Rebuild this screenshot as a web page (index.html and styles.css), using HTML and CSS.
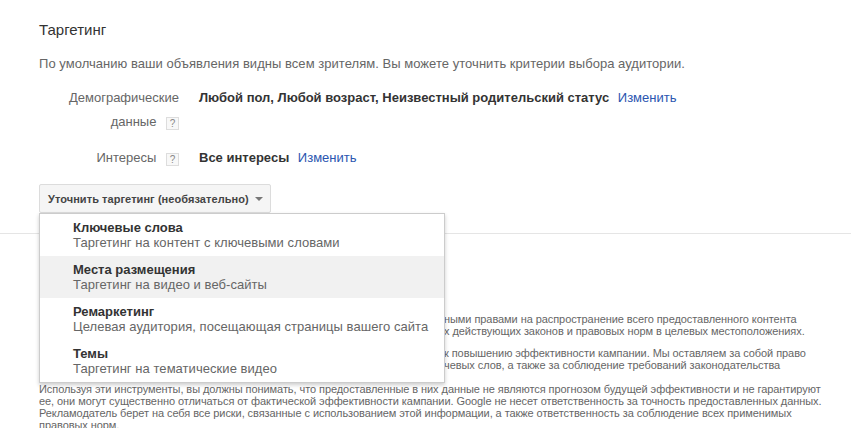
FILE: index.html
```html
<!DOCTYPE html>
<html lang="ru">
<head>
<meta charset="utf-8">
<title>Таргетинг</title>
<link rel="stylesheet" href="styles.css">
</head>
<body>
<main class="page">
  <h2 class="title">Таргетинг</h2>
  <p class="intro">По умолчанию ваши объявления видны всем зрителям. Вы можете уточнить критерии выбора аудитории.</p>
  <div class="row row-demo">
    <div class="label">Демографические<br>данные <span class="help">?</span></div>
    <div class="value"><b>Любой пол, Любой возраст, Неизвестный родительский статус</b> <a class="link" href="#">Изменить</a></div>
  </div>
  <div class="row row-int">
    <div class="label">Интересы <span class="help">?</span></div>
    <div class="value"><b>Все интересы</b> <a class="link" href="#">Изменить</a></div>
  </div>
  <div class="dropdown">
    <button class="btn" type="button">Уточнить таргетинг (необязательно)<span class="caret"></span></button>
    <ul class="menu">
      <li class="item"><strong>Ключевые слова</strong><span>Таргетинг на контент с ключевыми словами</span></li>
      <li class="item item-active"><strong>Места размещения</strong><span>Таргетинг на видео и веб-сайты</span></li>
      <li class="item"><strong>Ремаркетинг</strong><span>Целевая аудитория, посещающая страницы вашего сайта</span></li>
      <li class="item"><strong>Темы</strong><span>Таргетинг на тематические видео</span></li>
    </ul>
  </div>
  <hr class="rule">
  <section class="legal">
    <p class="para"><span class="line cut-1">ными правами на распространение всего предоставленного контента</span><span class="line cut-2">х действующих законов и правовых норм в целевых местоположениях.</span></p>
    <p class="para"><span class="line cut-3">к повышению эффективности кампании. Мы оставляем за собой право</span><span class="line cut-4">чевых слов, а также за соблюдение требований законодательства</span></p>
    <p class="para para-last"><span class="line">Используя эти инструменты, вы должны понимать, что предоставленные в них данные не являются прогнозом будущей эффективности и не гарантируют</span><span class="line">ее, они могут существенно отличаться от фактической эффективности кампании. Google не несет ответственность за точность предоставленных данных.</span><span class="line">Рекламодатель берет на себя все риски, связанные с использованием этой информации, а также ответственность за соблюдение всех применимых</span><span class="line">правовых норм.</span></p>
  </section>
</main>
</body>
</html>
```
FILE: styles.css
```css
* { box-sizing: border-box; }
html, body { margin: 0; height: 100%; overflow: hidden; background: #fff; }
body { font-family: "Liberation Sans", Arial, sans-serif; font-size: 13px; color: #444; }
.page { padding: 22px 0 0 39px; height: 428px; overflow: hidden; }
.title { margin: 0; font-size: 15px; font-weight: 400; line-height: 16px; color: #333; }
.intro { margin: 18px 0 0; line-height: 16px; color: #666; letter-spacing: .04px; }
.row { display: flex; gap: 20px; }
.row-demo { margin-top: 14px; }
.row-int { margin-top: 12px; }
.label { width: 140px; text-align: right; line-height: 24px; color: #666; }
.value { line-height: 24px; color: #333; }
.value b { font-weight: 700; color: #333; }
.link { color: #2a55b0; text-decoration: none; margin-left: 5px; }
.help { display: inline-block; width: 13px; height: 13px; margin-left: 6px; border: 1px solid #ddd; background: #f8f8f8; color: #888; font-size: 10px; line-height: 11px; text-align: center; vertical-align: -1px; }
.dropdown { position: relative; margin-top: 14px; width: 232px; }
.btn { display: flex; align-items: center; width: 232px; height: 29px; padding: 0 0 0 8px; border: 1px solid #dcdcdc; border-radius: 2px; background: #f5f5f5; color: #444; font: 700 11px "Liberation Sans", Arial, sans-serif; letter-spacing: .06px; }
.caret { width: 0; height: 0; margin-left: 6px; border-style: solid; border-width: 4px 4px 0; border-color: #777 transparent transparent; }
.menu { position: absolute; left: 0; top: 29px; z-index: 2; width: 406px; height: 170px; margin: 0; padding: 0; list-style: none; background: #fff; border: 1px solid #ccc; box-shadow: 0 2px 4px rgba(0,0,0,.2); }
.item { height: 42px; padding: 6px 0 0 33px; color: #666; line-height: 15px; }
.item strong { display: block; color: #333; font-weight: 700; }
.item span { display: block; letter-spacing: .05px; }
.item-active { background: #f1f1f1; }
.rule { margin: 20px 0 0 -39px; width: 851px; height: 0; border: 0; border-top: 1px solid #e5e5e5; }
.legal { margin-top: 79px; font-size: 11px; line-height: 12px; color: #666; letter-spacing: -.07px; }
.para { margin: 0 0 10px; }
.para-last { margin-top: 12px; }
.line { display: block; white-space: nowrap; }
.cut-1 { padding-left: 405px; }
.cut-2 { padding-left: 405px; }
.cut-3 { padding-left: 405px; }
.cut-4 { padding-left: 405px; }
```
